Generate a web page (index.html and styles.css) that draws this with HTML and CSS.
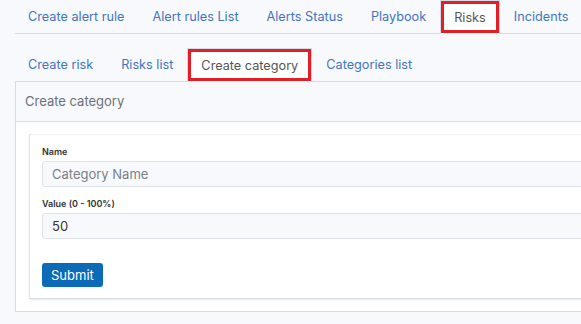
FILE: index.html
```html
<!DOCTYPE html>
<html lang="en">
<head>
  <meta charset="UTF-8">
  <title>Create category</title>
  <link rel="stylesheet" href="styles.css">
</head>
<body>
  <div class="page">
    <!-- main navigation -->
    <ul class="tabs">
      <li><a href="#">Create alert rule</a></li>
      <li><a href="#">Alert rules List</a></li>
      <li><a href="#">Alerts Status</a></li>
      <li><a href="#">Playbook</a></li>
      <li class="active"><a href="#">Risks</a></li>
      <li><a href="#">Incidents</a></li>
    </ul>

    <!-- risks sub navigation -->
    <ul class="tabs sub-tabs">
      <li><a href="#">Create risk</a></li>
      <li><a href="#">Risks list</a></li>
      <li class="active"><a href="#">Create category</a></li>
      <li><a href="#">Categories list</a></li>
    </ul>

    <div class="card">
      <div class="card-header">Create category</div>
      <div class="card-body">
        <form class="inner-card">
          <label for="name">Name</label>
          <input type="text" id="name" placeholder="Category Name">
          <label for="value">Value (0 - 100%)</label>
          <input type="text" id="value" value="50">
          <button type="button">Submit</button>
        </form>
      </div>
    </div>
  </div>
</body>
</html>
```

FILE: styles.css
```css
/* Global */
body {
  margin: 0;
  background: #f8f9fc;
  font-family: 'Inter', 'Noto Sans', sans-serif;
  overflow: hidden;
}

.page {
  width: 640px;
  padding-left: 15px;
}

/* Tabs */
.tabs {
  display: flex;
  list-style: none;
  margin: 0;
  padding: 0;
  border-bottom: 1px solid #d6dbe6;
}

.tabs li {
  margin-bottom: -1px;
}

.tabs li:first-child a {
  padding-left: 13px;
}

.tabs a {
  display: block;
  height: 33px;
  line-height: 34px;
  padding: 0 14px;
  font-size: 12.7px;
  color: #3f74c2;
  text-decoration: none;
}

.tabs .active a {
  box-sizing: border-box;
  height: 34px;
  line-height: 33px;
  padding: 0 13px;
  background: #fff;
  color: #555;
  border: 1px solid #d6dbe6;
  border-bottom: none;
  outline: 3px solid #e41e26;
  outline-offset: -4px;
}

.sub-tabs {
  margin-top: 14px;
}

/* Card */
.card {
  border: 1px solid #d6dbe6;
  border-top: none;
  background: #fff;
}

.card-header {
  height: 39px;
  line-height: 39px;
  padding-left: 9px;
  font-size: 13px;
  color: #6b7079;
  background: #f8f9fc;
  border-bottom: 1px solid #d6dbe6;
}

.card-body {
  padding: 12px 0 12px 13px;
}

.inner-card {
  display: flex;
  flex-direction: column;
  align-items: flex-start;
  padding: 11px 0 11px 12px;
  border: 1px solid #eef0f5;
  border-left-color: #dfe3eb;
  border-bottom-color: #d6dbe6;
  box-shadow: 0 1px 2px rgba(180, 188, 210, 0.35);
}

.inner-card label {
  font-size: 9px;
  font-weight: 600;
  color: #333;
  line-height: 11px;
  margin-bottom: 4px;
}

.inner-card input {
  box-sizing: border-box;
  width: 100%;
  height: 26px;
  padding: 0 9px;
  border: 1px solid #dde1e9;
  border-radius: 3px;
  background: #f8f9fc;
  font-family: inherit;
  font-size: 13px;
  color: #333;
  margin-bottom: 11px;
  outline: none;
}

.inner-card input::placeholder {
  color: #7a7f87;
}

.inner-card input#value {
  margin-bottom: 24px;
}

.inner-card button {
  height: 24px;
  padding: 0 9px;
  border: none;
  border-radius: 3px;
  background: #0b6bb8;
  color: #fff;
  font-family: inherit;
  font-size: 13px;
  cursor: pointer;
}
```
